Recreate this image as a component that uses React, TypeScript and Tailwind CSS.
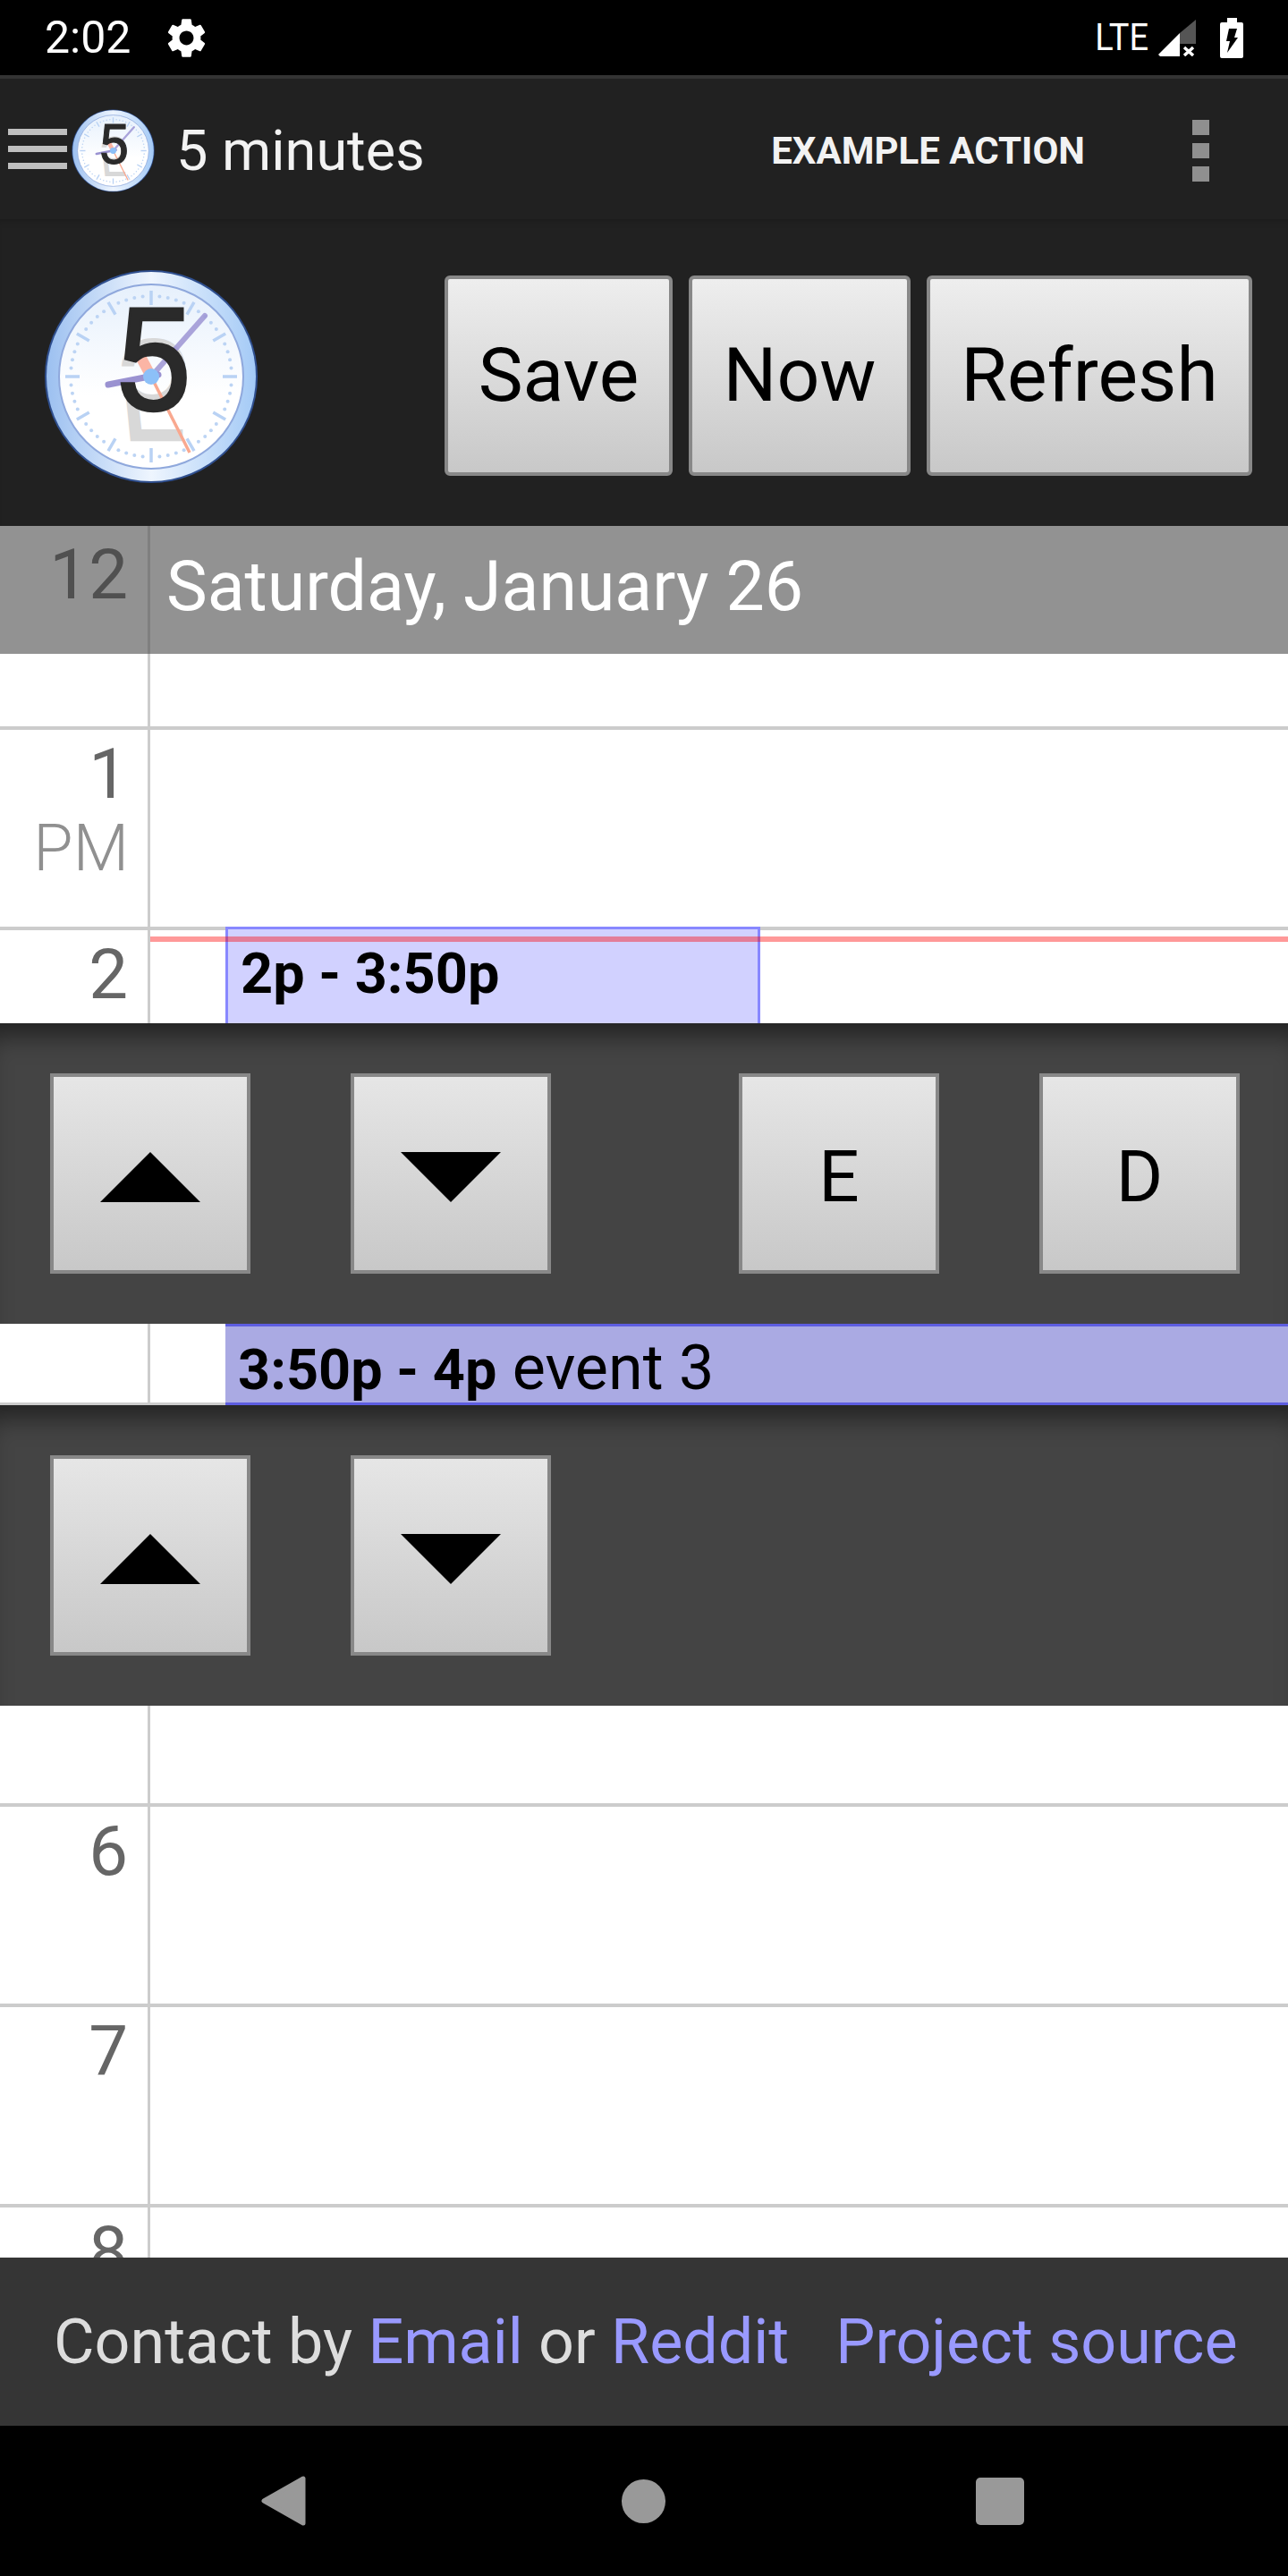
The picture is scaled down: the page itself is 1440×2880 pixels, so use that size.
// App.tsx — calendar screen with floating event controls
import { MdSettings } from "react-icons/md";

const ANGLES_60 = Array.from({ length: 60 }, (_, i) => (i * Math.PI) / 30);

function ClockLogo({ className }: { className: string }) {
  return (
    <svg viewBox="0 0 240 240" className={className}>
      <defs>
        <linearGradient id="rim" x1="0" y1="0.5" x2="1" y2="0.5">
          <stop offset="0" stopColor="#9cc0f0" />
          <stop offset="0.5" stopColor="#eef5fe" />
          <stop offset="1" stopColor="#a4caf6" />
        </linearGradient>
        <linearGradient id="face" x1="0.5" y1="0" x2="0.5" y2="1">
          <stop offset="0" stopColor="#e6f0fc" />
          <stop offset="0.6" stopColor="#ffffff" />
          <stop offset="1" stopColor="#ffffff" />
        </linearGradient>
      </defs>
      <circle cx="120" cy="120" r="119" fill="#2f4f8f" />
      <circle cx="120" cy="120" r="117" fill="url(#rim)" />
      <circle cx="120" cy="120" r="103" fill="url(#face)" stroke="#8fa8dc" strokeWidth="2" />
      {ANGLES_60.map((a, i) =>
        i % 5 === 0 ? (
          <line
            key={i}
            x1={120 + 80 * Math.sin(a)}
            y1={120 - 80 * Math.cos(a)}
            x2={120 + 96 * Math.sin(a)}
            y2={120 - 96 * Math.cos(a)}
            stroke="#b9d2f4"
            strokeWidth="3.5"
          />
        ) : (
          <circle key={i} cx={120 + 90 * Math.sin(a)} cy={120 - 90 * Math.cos(a)} r="2" fill="#bcd4f4" />
        ),
      )}
      <text x="120" y="0" transform="translate(0 79) scale(1 -1)" textAnchor="middle" fontSize="160" fill="#d8d8d8" className="font-['Roboto']">
        5
      </text>
      <line x1="120" y1="120" x2="163" y2="205" stroke="#f9a88f" strokeWidth="3.5" />
      <line x1="120" y1="120" x2="105" y2="92" stroke="#fbb5a5" strokeWidth="12" />
      <line x1="120" y1="120" x2="180" y2="52" stroke="#9c94d4" strokeOpacity="0.85" strokeWidth="6" strokeLinecap="round" />
      <line x1="128" y1="118" x2="72" y2="129" stroke="#8f86cc" strokeOpacity="0.9" strokeWidth="7" strokeLinecap="round" />
      <text x="120" y="157" textAnchor="middle" fontSize="160" fill="#2a2a2a" stroke="#2a2a2a" strokeWidth="2.5" className="font-['Roboto']">
        5
      </text>
      <circle cx="120" cy="120" r="9" fill="#8cc0f8" />
    </svg>
  );
}

function StatusBar() {
  return (
    <div className="h-[84px] shrink-0 bg-black flex items-center pl-[50px] pr-[50px] text-white">
      <span className="text-[50px] leading-none">2:02</span>
      <MdSettings size={53} className="ml-[36px]" />
      <span className="ml-auto text-[38px] leading-none scale-y-[1.1]">LTE</span>
      <svg viewBox="0 0 42 41" className="ml-[11px] w-[42px] h-[41px]">
        <path d="M24 15 L42 0 V27 H24 Z" fill="#555555" />
        <path d="M0 39 L24 15 V41 H2 Z" fill="#ffffff" />
        <path d="M29 31 L39 40 M39 31 L29 40" stroke="#ffffff" strokeWidth="3.5" />
      </svg>
      <svg viewBox="0 0 26 45" className="ml-[27px] w-[26px] h-[45px]">
        <path d="M8 0 H19 V5 H24 Q26 5 26 7 V43 Q26 45 24 45 H2 Q0 45 0 43 V7 Q0 5 2 5 H8 Z" fill="#ffffff" />
        <path d="M10 12 H19 L16 22 H20 L8 39 L11 26 H7 Z" fill="#000000" />
      </svg>
    </div>
  );
}

function Toolbar() {
  return (
    <div className="h-[161px] shrink-0 bg-[#212121] border-t-[4px] border-[#333333] pt-[4px] flex items-center text-[#f2f2f2]">
      <div className="ml-[9px] -mt-[4px] w-[66px] flex flex-col gap-[12px]">
        <div className="h-[7px] bg-[#bfbfbf]" />
        <div className="h-[7px] bg-[#bfbfbf]" />
        <div className="h-[7px] bg-[#bfbfbf]" />
      </div>
      <ClockLogo className="ml-[5px] w-[93px] h-[93px]" />
      <span className="ml-[24px] text-[63px] leading-none">5 minutes</span>
      <span className="ml-auto text-[42px] font-bold leading-none">EXAMPLE ACTION</span>
      <div className="ml-[120px] mr-[88px] flex flex-col gap-[9px]">
        <div className="w-[19px] h-[17px] bg-[#8f8f8f]" />
        <div className="w-[19px] h-[17px] bg-[#8f8f8f]" />
        <div className="w-[19px] h-[17px] bg-[#8f8f8f]" />
      </div>
    </div>
  );
}

function TopButton({ label, width }: { label: string; width: string }) {
  return (
    <button className={`${width} h-[224px] rounded-[6px] border-[4px] border-[#888888] bg-gradient-to-b from-[#eeeeee] to-[#c8c8c8] text-black text-[84px] leading-none`}>
      {label}
    </button>
  );
}

function Controls() {
  return (
    <div className="h-[343px] shrink-0 bg-[#212121] shadow-[inset_0_8px_10px_-8px_rgba(0,0,0,0.25)] flex items-start pl-[49px]">
      <ClockLogo className="mt-[56px] w-[240px] h-[240px]" />
      <div className="mt-[63px] ml-[208px] flex gap-[18px]">
        <TopButton label="Save" width="w-[255px]" />
        <TopButton label="Now" width="w-[248px]" />
        <TopButton label="Refresh" width="w-[364px]" />
      </div>
    </div>
  );
}

function Triangle({ down }: { down?: boolean }) {
  return (
    <svg viewBox="0 0 112 56" className="w-[112px] h-[56px]">
      <path d={down ? "M0 0 H112 L56 56 Z" : "M56 0 L112 56 H0 Z"} fill="#000000" />
    </svg>
  );
}

function PanelButton({ children }: { children: React.ReactNode }) {
  return (
    <button className="w-[224px] h-[224px] shrink-0 border-[4px] border-[#888888] bg-gradient-to-b from-[#e6e6e6] to-[#c8c8c8] pt-[8px] text-black text-[80px] leading-none flex items-center justify-center">
      {children}
    </button>
  );
}

function EventPanel({ children }: { children: React.ReactNode }) {
  return (
    <div className="h-[336px] bg-[#444444] shadow-[inset_0_30px_28px_-16px_rgba(0,0,0,0.5)] pt-[56px] pl-[56px] flex gap-[112px]">
      {children}
    </div>
  );
}

function HourLabel({ hour, meridiem }: { hour: string; meridiem?: string }) {
  return (
    <div className="w-[168px] h-full shrink-0 border-r-[3px] border-[#cccccc] pr-[22px] pt-[11px] text-right">
      <div className="text-[78px] leading-none text-[#666666]">{hour}</div>
      {meridiem && <div className="mt-[8px] -mr-[1px] text-[72px] leading-none font-light text-[#909090]">{meridiem}</div>}
    </div>
  );
}

function HourRow({ hour, meridiem }: { hour: string; meridiem?: string }) {
  return (
    <div className="h-[224px] border-t-[4px] border-[#cccccc]">
      <HourLabel hour={hour} meridiem={meridiem} />
    </div>
  );
}

function Calendar() {
  return (
    <div className="flex-1 min-h-0 overflow-hidden bg-white">
      {/* day header */}
      <div className="h-[143px] bg-[#929292] flex">
        <div className="w-[168px] shrink-0 border-r-[3px] border-[#7f7f7f] pr-[22px] pt-[16px] text-right text-[78px] leading-none text-[#505050]">12</div>
        <div className="pl-[18px] pt-[30px] text-[77px] leading-none text-white">Saturday, January 26</div>
      </div>
      <div className="h-[81px]">
        <div className="w-[168px] h-full border-r-[3px] border-[#cccccc]" />
      </div>
      <HourRow hour="1" meridiem="PM" />

      {/* 2pm row, cut off by the first panel */}
      <div className="relative h-[108px] border-t-[4px] border-[#cccccc] flex">
        <HourLabel hour="2" />
        <div className="ml-[84px] -mt-[4px] w-[598px] h-[108px] border-[3px] border-b-0 border-[#8888ff] bg-[#d1d1ff] pl-[14px] pt-[18px] text-[63px] leading-none font-bold text-black">
          2p - 3:50p
        </div>
        <div className="absolute left-[168px] right-0 top-[7px] h-[6px] bg-[#ff000066]" />
      </div>
      <EventPanel>
        <PanelButton><Triangle /></PanelButton>
        <PanelButton><Triangle down /></PanelButton>
        <div className="ml-[98px] flex gap-[112px]">
          <PanelButton>E</PanelButton>
          <PanelButton>D</PanelButton>
        </div>
      </EventPanel>

      {/* 3:50pm row */}
      <div className="h-[91px] flex">
        <div className="w-[252px] shrink-0 h-full border-b-[3px] border-[#cccccc]">
          <div className="w-[168px] h-full border-r-[3px] border-[#cccccc]" />
        </div>
        <div className="flex-1 border-y-[3px] border-[#5d5de0] bg-[#aaaae3] pl-[14px] pt-[11px] text-[70px] leading-none text-black">
          <b className="text-[63px] font-bold">3:50p - 4p</b> event 3
        </div>
      </div>
      <EventPanel>
        <PanelButton><Triangle /></PanelButton>
        <PanelButton><Triangle down /></PanelButton>
      </EventPanel>

      <div className="h-[109px]">
        <div className="w-[168px] h-full border-r-[3px] border-[#cccccc]" />
      </div>
      <HourRow hour="6" />
      <HourRow hour="7" />
      <HourRow hour="8" />
    </div>
  );
}

function Footer() {
  return (
    <div className="h-[188px] shrink-0 bg-[#353535] flex items-center pl-[60px] text-[70px] leading-none text-[#dddddd]">
      <span>
        Contact by <a className="text-[#9999ff]">Email</a> or <a className="text-[#9999ff]">Reddit</a>
      </span>
      <a className="ml-[52px] text-[#9999ff]">Project source</a>
    </div>
  );
}

function NavBar() {
  return (
    <div className="h-[168px] shrink-0 bg-black flex items-center pl-[292px]">
      <svg viewBox="0 0 50 56" className="w-[50px] h-[56px]">
        <path d="M47 3 V53 L3 28 Z" fill="#999999" stroke="#999999" strokeWidth="5" strokeLinejoin="round" />
      </svg>
      <div className="ml-[353px] w-[49px] h-[49px] rounded-full bg-[#999999]" />
      <div className="ml-[347px] w-[54px] h-[53px] rounded-[5px] bg-[#999999]" />
    </div>
  );
}

export default function App() {
  return (
    <div className="w-[1440px] h-[2880px] flex flex-col overflow-hidden font-['Roboto',sans-serif]">
      <StatusBar />
      <Toolbar />
      <Controls />
      <Calendar />
      <Footer />
      <NavBar />
    </div>
  );
}
